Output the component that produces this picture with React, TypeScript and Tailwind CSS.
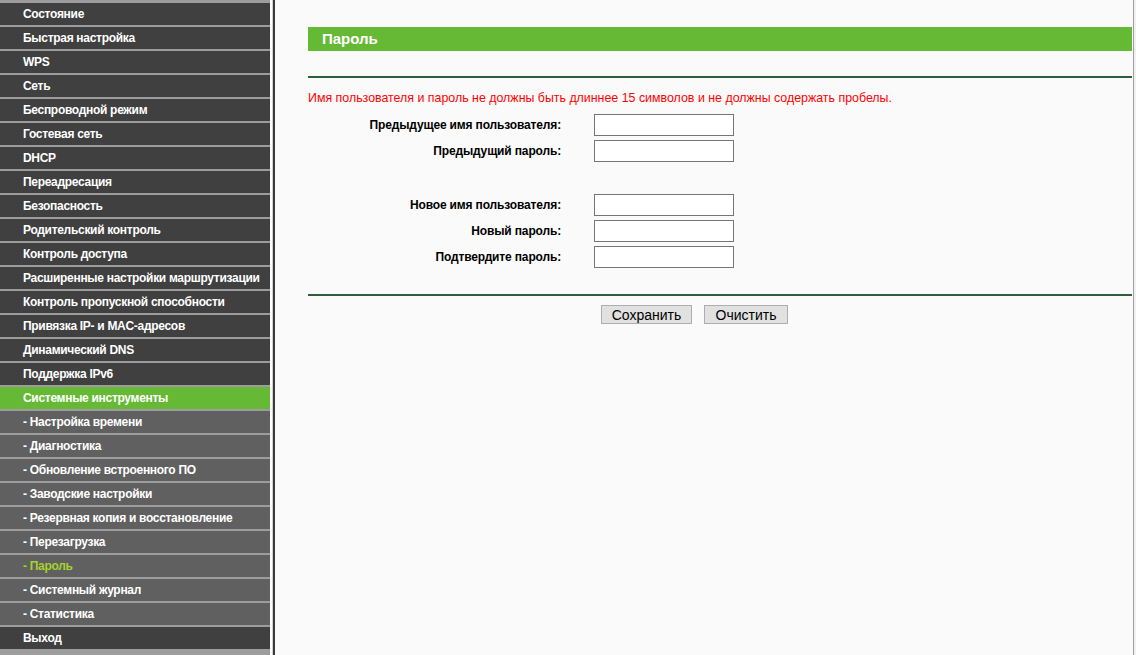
const menu: { label: string; sub?: boolean; active?: boolean; section?: boolean }[] = [
  { label: "Состояние" },
  { label: "Быстрая настройка" },
  { label: "WPS" },
  { label: "Сеть" },
  { label: "Беспроводной режим" },
  { label: "Гостевая сеть" },
  { label: "DHCP" },
  { label: "Переадресация" },
  { label: "Безопасность" },
  { label: "Родительский контроль" },
  { label: "Контроль доступа" },
  { label: "Расширенные настройки маршрутизации" },
  { label: "Контроль пропускной способности" },
  { label: "Привязка IP- и MAC-адресов" },
  { label: "Динамический DNS" },
  { label: "Поддержка IPv6" },
  { label: "Системные инструменты", section: true },
  { label: "- Настройка времени", sub: true },
  { label: "- Диагностика", sub: true },
  { label: "- Обновление встроенного ПО", sub: true },
  { label: "- Заводские настройки", sub: true },
  { label: "- Резервная копия и восстановление", sub: true },
  { label: "- Перезагрузка", sub: true },
  { label: "- Пароль", sub: true, active: true },
  { label: "- Системный журнал", sub: true },
  { label: "- Статистика", sub: true },
  { label: "Выход" },
];

function Field({ label }: { label: string }) {
  return (
    <>
      <div className="h-[22px] flex items-center justify-end font-bold text-[12px] tracking-[-0.15px] text-black">{label}</div>
      <input type="text" className="h-[22px] w-[140px] border border-[#767676] bg-white outline-none" />
    </>
  );
}

export default function App() {
  return (
    <div
      className="flex h-[655px] w-[1136px] overflow-hidden bg-[#fafafa]"
      style={{ fontFamily: '"Liberation Sans", Arial, sans-serif' }}
    >
      <aside className="w-[270px] shrink-0 bg-[#9d9d9d] pt-[3px]">
        {menu.map((m) => (
          <div
            key={m.label}
            className={
              "h-[22px] mb-[2px] flex items-center pl-[23px] text-[12px] font-bold tracking-[-0.3px] whitespace-nowrap " +
              (m.section ? "bg-[#66b934] text-white" : m.sub ? "bg-[#606060] " + (m.active ? "text-[#a6d22e]" : "text-white") : "bg-[#404040] text-white")
            }
          >
            {m.label}
          </div>
        ))}
      </aside>
      <div className="w-[2px] shrink-0 bg-[#ffffff]" />
      <div className="w-[1px] shrink-0 bg-[#d0d0d0]" />
      <div className="w-[2px] shrink-0 bg-[#3a3a3a]" />
      <main className="flex-1 pl-[33px] pt-[27px]">
        <div className="h-[24px] bg-[#66b934] flex items-center pl-[14px] text-white font-bold text-[15px]">Пароль</div>
        <div className="mt-[25px] h-[2px] bg-[#2f5e3f]" />
        <p className="mt-[13px] text-[12.4px] leading-[14px] text-[#ff0000]">
          Имя пользователя и пароль не должны быть длиннее 15 символов и не должны содержать пробелы.
        </p>
        <div className="mt-[9px] grid grid-cols-[253px_140px] gap-x-[33px] gap-y-[4px]">
          <Field label="Предыдущее имя пользователя:" />
          <Field label="Предыдущий пароль:" />
        </div>
        <div className="mt-[32px] grid grid-cols-[253px_140px] gap-x-[33px] gap-y-[4px]">
          <Field label="Новое имя пользователя:" />
          <Field label="Новый пароль:" />
          <Field label="Подтвердите пароль:" />
        </div>
        <div className="mt-[26px] h-[2px] bg-[#2f5e3f]" />
        <div className="mt-[9px] ml-[293px] flex gap-[12px]">
          <button className="h-[19px] w-[91px] border border-[#adadad] bg-[#e1e1e1] text-[14px] leading-none text-black">
            Сохранить
          </button>
          <button className="h-[19px] w-[84px] border border-[#adadad] bg-[#e1e1e1] text-[14px] leading-none text-black">
            Очистить
          </button>
        </div>
      </main>
      <div className="w-[1px] shrink-0 bg-[#fafafa]" />
      <div className="w-[1px] shrink-0 bg-[#a0a0a0]" />
      <div className="w-[2px] shrink-0 bg-[#f0f0f0]" />
    </div>
  );
}
